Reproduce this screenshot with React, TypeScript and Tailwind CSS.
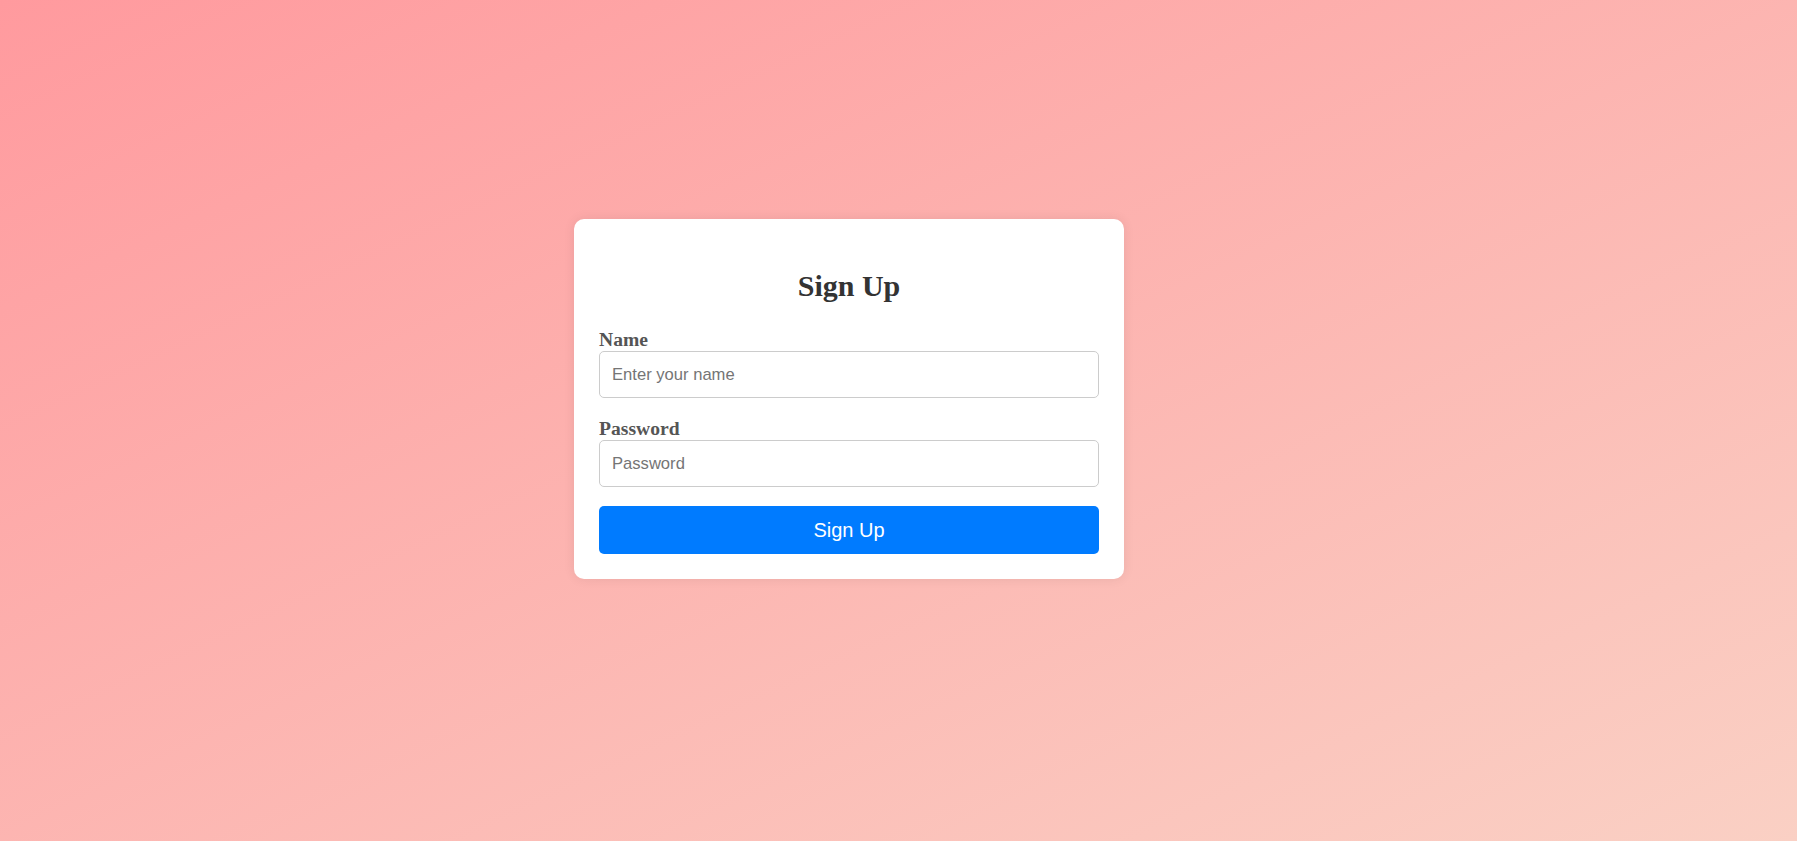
import { useState } from "react";

/**
 * Sign up card on a soft pink gradient.
 */
const App = () => {
    const [name, setName] = useState("");
    const [password, setPassword] = useState("");

    return (
        <div className="min-h-screen w-full flex items-center justify-center bg-[linear-gradient(155deg,#ff9a9e_0%,#fad0c4_100%)]">
            <form
                onSubmit={(e) => e.preventDefault()}
                className="w-[550px] h-[360px] mr-[99px] mb-[43px] bg-white rounded-[10px] shadow-[0_0_12px_rgba(0,0,0,0.08)] px-[25px] pt-[25px] pb-[25px] flex flex-col"
            >
                <h2 className="mt-[24px] mb-[25px] text-center text-[30px] leading-[36px] font-bold text-[#333] font-['Liberation_Serif',serif]">
                    Sign Up
                </h2>

                <label
                    htmlFor="name"
                    className="block text-[19.6px] leading-[22px] font-bold text-[#555] font-['Liberation_Serif',serif]"
                >
                    Name
                </label>
                <input
                    id="name"
                    type="text"
                    value={name}
                    onChange={(e) => setName(e.target.value)}
                    placeholder="Enter your name"
                    className="h-[47px] w-full border border-[#ccc] rounded-[5px] px-[12px] text-[16.6px] text-[#333] placeholder:text-[#757575] font-['Liberation_Sans',Arial,sans-serif] outline-none"
                />

                <label
                    htmlFor="password"
                    className="block mt-[20px] text-[19.6px] leading-[22px] font-bold text-[#555] font-['Liberation_Serif',serif]"
                >
                    Password
                </label>
                <input
                    id="password"
                    type="password"
                    value={password}
                    onChange={(e) => setPassword(e.target.value)}
                    placeholder="Password"
                    className="h-[47px] w-full border border-[#ccc] rounded-[5px] px-[12px] text-[16.6px] text-[#333] placeholder:text-[#757575] font-['Liberation_Sans',Arial,sans-serif] outline-none"
                />

                <button
                    type="submit"
                    className="mt-[19px] h-[48px] w-full rounded-[5px] bg-[#007bff] text-white text-[20px] font-['Liberation_Sans',Arial,sans-serif] cursor-pointer"
                >
                    Sign Up
                </button>
            </form>
        </div>
    );
};

export default App;
